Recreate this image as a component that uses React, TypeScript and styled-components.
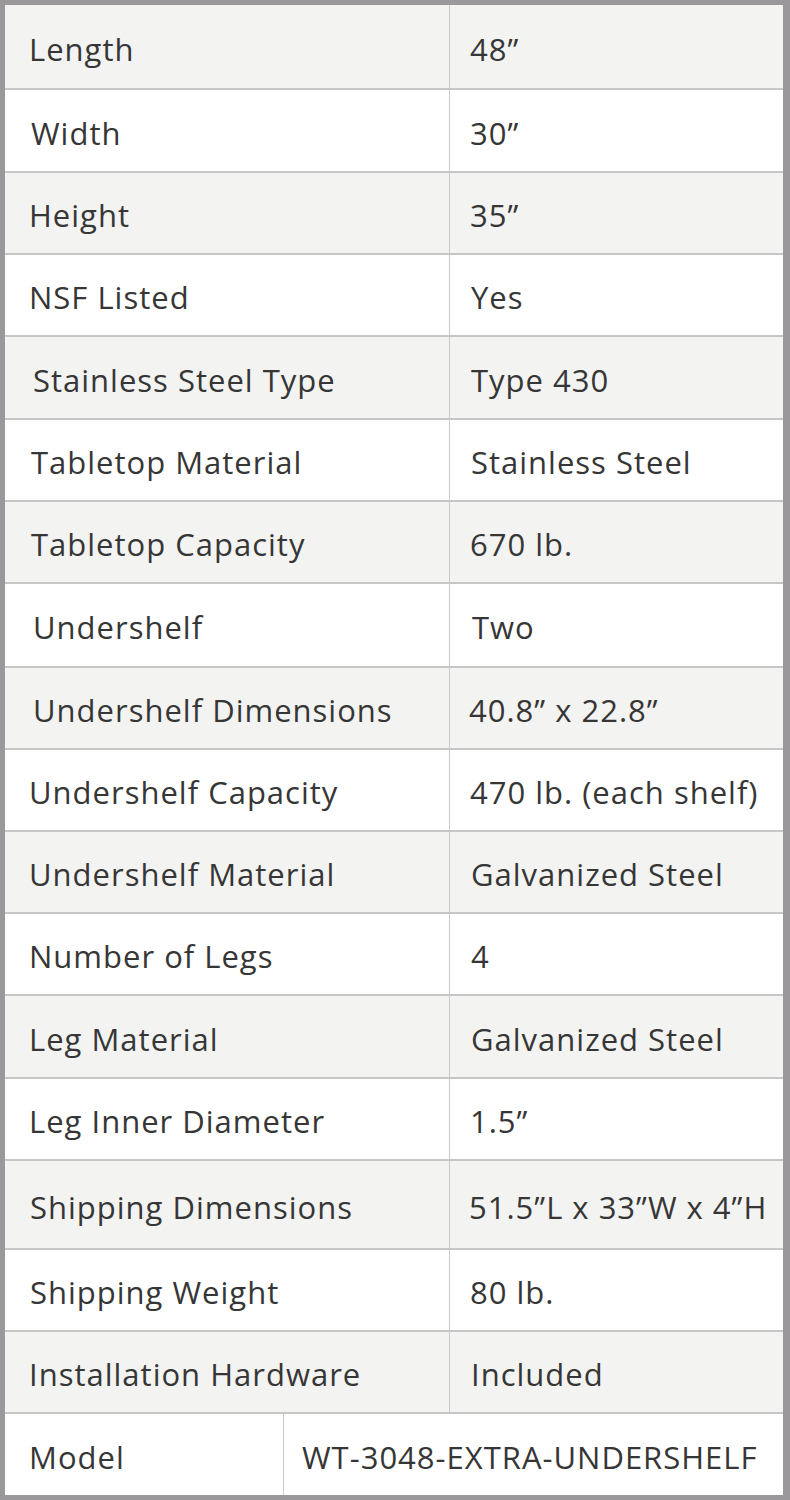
import styled, { createGlobalStyle } from "styled-components"

type Spec = {
  label: string
  value: string
  h: number
  lx?: number
  vx?: number
}

const specs: Spec[] = [
  { label: "Length", value: "48\u201D", h: 83, lx: 29, vx: 471 },
  { label: "Width", value: "30\u201D", h: 81, lx: 31, vx: 471 },
  { label: "Height", value: "35\u201D", h: 80, lx: 29, vx: 471 },
  { label: "NSF Listed", value: "Yes", h: 80, lx: 29, vx: 472 },
  { label: "Stainless Steel Type", value: "Type 430", h: 81, lx: 33, vx: 472 },
  { label: "Tabletop Material", value: "Stainless Steel", h: 80, lx: 31, vx: 472 },
  { label: "Tabletop Capacity", value: "670 lb.", h: 80, lx: 31, vx: 471 },
  { label: "Undershelf", value: "Two", h: 82, lx: 33, vx: 473 },
  { label: "Undershelf Dimensions", value: "40.8\u201D x 22.8\u201D", h: 80, lx: 33, vx: 470 },
  { label: "Undershelf Capacity", value: "470 lb. (each shelf)", h: 80, lx: 29, vx: 471 },
  { label: "Undershelf Material", value: "Galvanized Steel", h: 80, lx: 29, vx: 472 },
  { label: "Number of Legs", value: "4", h: 80, lx: 29, vx: 472 },
  { label: "Leg Material", value: "Galvanized Steel", h: 81, lx: 29, vx: 472 },
  { label: "Leg Inner Diameter", value: "1.5\u201D", h: 80, lx: 29, vx: 471 },
  { label: "Shipping Dimensions", value: "51.5\u201DL x 33\u201DW x 4\u201DH", h: 87, lx: 30, vx: 470 },
  { label: "Shipping Weight", value: "80 lb.", h: 80, lx: 30, vx: 471 },
  { label: "Installation Hardware", value: "Included", h: 80, lx: 29, vx: 472 },
]

const App = () => {
  return (
    <>
      <GlobalStyle />
      <Frame>
        {specs.map((s, i) => (
          <Row key={s.label} $shade={i % 2 === 0} $h={s.h}>
            <Label $w={445} $pad={(s.lx ?? 29) - 5}>{s.label}</Label>
            <Value $pad={(s.vx ?? 471) - 451}>{s.value}</Value>
          </Row>
        ))}
        <Row $shade={false} $h={81} $last>
          <Label $w={279} $pad={24}>Model</Label>
          <Value $pad={18}>WT-3048-EXTRA-UNDERSHELF</Value>
        </Row>
      </Frame>
    </>
  )
}

export default App

const GlobalStyle = createGlobalStyle`
body {
  margin: 0;
  background: #ffffff;
}
`

const Frame = styled.div`
width: 790px;
height: 1500px;
box-sizing: border-box;
border-style: solid;
border-color: #9b989b;
border-width: 5px 7px 5px 5px;
display: flex;
flex-direction: column;
font-family: "Open Sans", "Noto Sans", sans-serif;
color: #363636;
`

const Row = styled.div<{ $shade: boolean; $h: number; $last?: boolean }>`
display: flex;
height: ${p => p.$h}px;
flex-shrink: 0;
background-color: ${p => (p.$shade ? "#f3f3f2" : "#ffffff")};
border-bottom: ${p => (p.$last ? "none" : "2px solid #c6c6c6")};
`

const Cell = styled.div<{ $pad: number }>`
display: flex;
align-items: center;
box-sizing: border-box;
padding-left: ${p => p.$pad}px;
padding-top: 4px;
font-size: 31px;
letter-spacing: 1px;
white-space: nowrap;
`

const Label = styled(Cell)<{ $w: number }>`
width: ${p => p.$w}px;
border-right: 1px solid #c9c9c9;
`

const Value = styled(Cell)`
flex: 1;
`
